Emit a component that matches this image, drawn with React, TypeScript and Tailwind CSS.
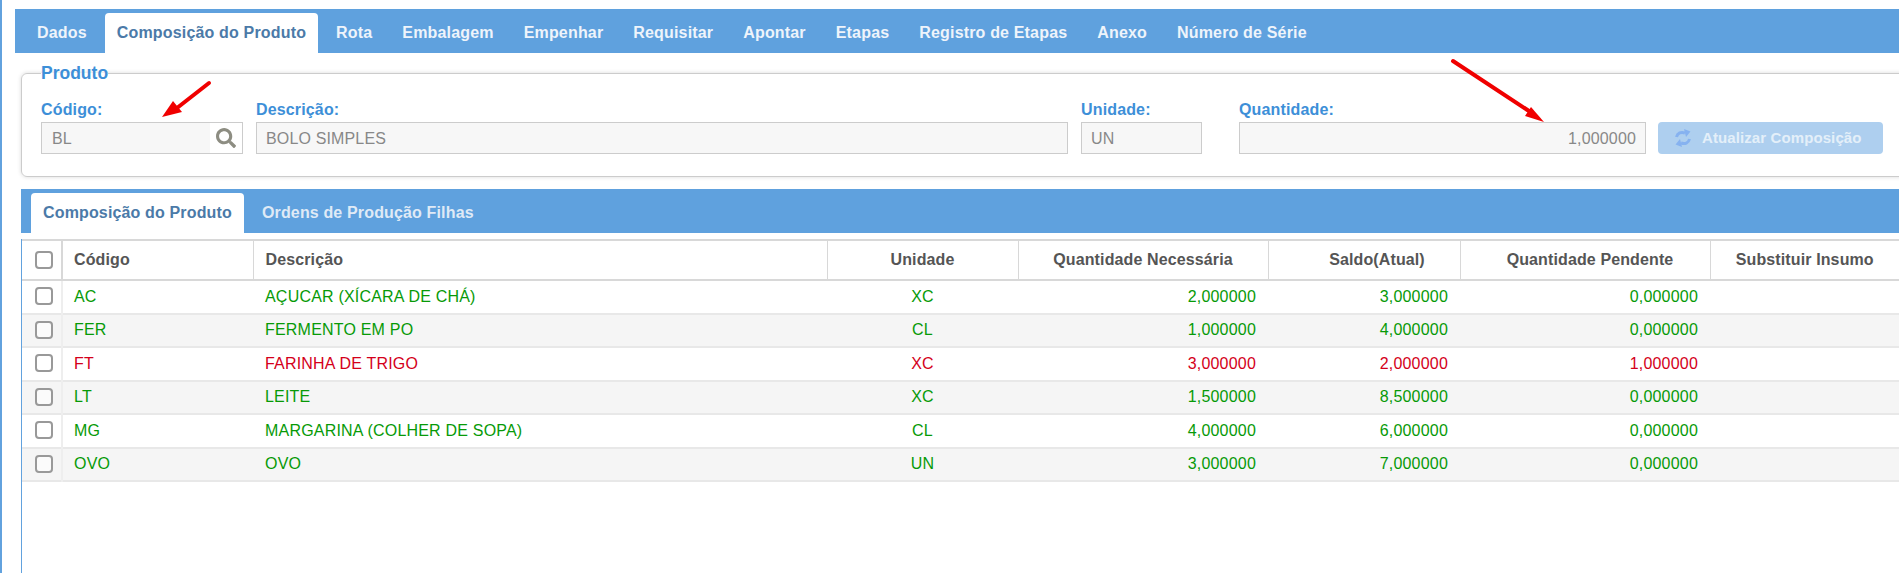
import { FaSearch } from "react-icons/fa";

const tabs = ["Dados", "Composição do Produto", "Rota", "Embalagem", "Empenhar", "Requisitar", "Apontar", "Etapas", "Registro de Etapas", "Anexo", "Número de Série"];
const rows = [
  ["AC", "AÇUCAR (XÍCARA DE CHÁ)", "XC", "2,000000", "3,000000", "0,000000", 0],
  ["FER", "FERMENTO EM PO", "CL", "1,000000", "4,000000", "0,000000", 0],
  ["FT", "FARINHA DE TRIGO", "XC", "3,000000", "2,000000", "1,000000", 1],
  ["LT", "LEITE", "XC", "1,500000", "8,500000", "0,000000", 0],
  ["MG", "MARGARINA (COLHER DE SOPA)", "CL", "4,000000", "6,000000", "0,000000", 0],
  ["OVO", "OVO", "UN", "3,000000", "7,000000", "0,000000", 0],
] as const;

function Check() {
  return <span className="-mt-[1px] block h-[18px] w-[18px] rounded-[4px] border-2 border-[#999] bg-white/60" />;
}

function Field({ label, value, className, right }: { label: string; value: string; className: string; right?: boolean }) {
  return (
    <div className={className}>
      <label className="mb-[2px] block h-[20px] text-[16px] leading-[20px] font-bold tracking-[0.15px] text-[#3d8fd8]">{label}</label>
      <div className={`flex h-[32px] items-center border border-[#ccc] bg-[#f7f7f7] px-[9px] pt-[1px] text-[16px] tracking-[0.15px] text-[#888] ${right ? "justify-end" : ""}`}>{value}</div>
    </div>
  );
}

export default function App() {
  return (
    <div className="relative h-[573px] w-[1899px] overflow-hidden border-l-2 border-[#62a2de] bg-white pt-[9px] font-['Liberation_Sans',Arial,sans-serif]">
      <div className="ml-[13px] flex h-[44px] items-end bg-[#5fa1de] pl-[10px]">
        {tabs.map((t, i) => (
          <div key={t} className={`mr-[6px] flex h-[40px] items-center rounded-t-[4px] px-[12px] text-[16px] font-bold tracking-[0.17px] ${i === 1 ? "bg-white text-[#4b7aa8]" : "text-[#eef4fb]"}`}>{t}</div>
        ))}
      </div>

      <fieldset className="mt-[10px] ml-[19px] h-[114px] w-[1900px] rounded-[6px] border border-[#ccc] pt-[17px] pl-[19px] shadow-[0_0_4px_rgba(0,0,0,0.15)]">
        <legend className="text-[17.5px] leading-[20px] font-bold text-[#3d8fd8]">Produto</legend>
        <div className="flex items-start">
          <div className="w-[202px]">
            <label className="mb-[2px] block h-[20px] text-[16px] leading-[20px] font-bold tracking-[0.15px] text-[#3d8fd8]">Código:</label>
            <div className="flex h-[32px] items-center border border-[#ccc] bg-[#f7f7f7] pl-[10px] text-[16px] text-[#888]">
              <span className="flex-1 pt-[1px]">BL</span>
              <span className="flex h-full w-[32px] items-center justify-center bg-white text-[#8d8d82]"><FaSearch size={20} /></span>
            </div>
          </div>
          <Field label="Descrição:" value="BOLO SIMPLES" className="ml-[13px] w-[812px]" />
          <Field label="Unidade:" value="UN" className="ml-[13px] w-[121px]" />
          <Field label="Quantidade:" value="1,000000" className="ml-[37px] w-[407px]" right />
          <div className="mt-[22px] ml-[12px] flex h-[32px] w-[225px] items-center rounded-[4px] bg-[#aecfef] pl-[17px] text-[15px] font-bold tracking-[0.1px] whitespace-nowrap text-[#e4eff9]">
            <svg width="16" height="20" viewBox="0 0 16 20" className="mr-[11px]" fill="none">
              <path d="M1.5 9 C2.5 5 6 3.5 10 5" stroke="#86b2f0" strokeWidth="3" />
              <path d="M9 1 L15.5 3.5 L11 9 Z" fill="#86b2f0" />
              <path d="M14.5 11 C13.5 15 10 16.5 6 15" stroke="#86b2f0" strokeWidth="3" />
              <path d="M7 19 L0.5 16.5 L5 11 Z" fill="#86b2f0" />
            </svg>
            Atualizar Composição
          </div>
        </div>
      </fieldset>

      <div className="mt-[12px] ml-[19px] flex h-[44px] items-end bg-[#5fa1de] pl-[10px]">
        {["Composição do Produto", "Ordens de Produção Filhas"].map((t, i) => (
          <div key={t} className={`mr-[6px] flex h-[40px] items-center rounded-t-[4px] px-[12px] text-[16px] font-bold tracking-[0.15px] ${i === 0 ? "bg-white text-[#4b7aa8]" : "text-[#dfeaf6]"}`}>{t}</div>
        ))}
      </div>

      <div className="mt-[6px] ml-[19px] h-[400px] w-[1878px] border-l border-[#62a2de]">
        <table className="w-[1877px] table-fixed border-collapse text-[16px]">
          <colgroup>
            <col className="w-[40px]" /><col className="w-[191px]" /><col className="w-[574px]" /><col className="w-[191px]" /><col className="w-[250px]" /><col className="w-[192px]" /><col className="w-[250px]" /><col className="w-[189px]" />
          </colgroup>
          <thead>
            <tr className="h-[40px] border-y-2 border-[#d8d8d8] tracking-[0.12px] text-[#555]">
              <th className="border-r-2 border-[#d8d8d8] pl-[13px] font-bold"><Check /></th>
              <th className="border-r border-[#d8d8d8] pl-[11px] text-left font-bold">Código</th>
              <th className="border-r border-[#d8d8d8] pl-[12px] text-left font-bold">Descrição</th>
              <th className="border-r border-[#d8d8d8] font-bold">Unidade</th>
              <th className="border-r border-[#d8d8d8] font-bold">Quantidade Necessária</th>
              <th className="border-r border-[#d8d8d8] pl-[26px] font-bold">Saldo(Atual)</th>
              <th className="border-r border-[#d8d8d8] pl-[10px] font-bold">Quantidade Pendente</th>
              <th className="font-bold">Substituir Insumo</th>
            </tr>
          </thead>
          <tbody>
            {rows.map((r, i) => (
              <tr key={r[0]} className={`h-[33.5px] border-b-2 border-[#e8e8e8] tracking-[0.2px] ${i % 2 ? "bg-[#f5f5f5]" : "bg-white"} ${r[6] ? "text-[#d4001a]" : "text-[#079a07]"}`}>
                <td className="border-r-2 border-[#eee] pl-[13px]"><Check /></td>
                <td className="pl-[11px]">{r[0]}</td>
                <td className="pl-[12px]">{r[1]}</td>
                <td className="text-center">{r[2]}</td>
                <td className="pr-[12px] text-right">{r[3]}</td>
                <td className="pr-[12px] text-right">{r[4]}</td>
                <td className="pr-[12px] text-right">{r[5]}</td>
                <td />
              </tr>
            ))}
          </tbody>
        </table>
      </div>

      <svg className="absolute top-0 left-0" width="1899" height="200" viewBox="0 0 1899 200">
        <path d="M207 83 L175 108" stroke="#f00000" strokeWidth="4" strokeLinecap="round" fill="none" />
        <path d="M160 117 L171 101 L180 112 Z" fill="#f00000" />
        <path d="M1451 61 L1530 113" stroke="#f00000" strokeWidth="4" strokeLinecap="round" fill="none" />
        <path d="M1542 122 L1523 116 L1529 107 Z" fill="#f00000" />
      </svg>
    </div>
  );
}
